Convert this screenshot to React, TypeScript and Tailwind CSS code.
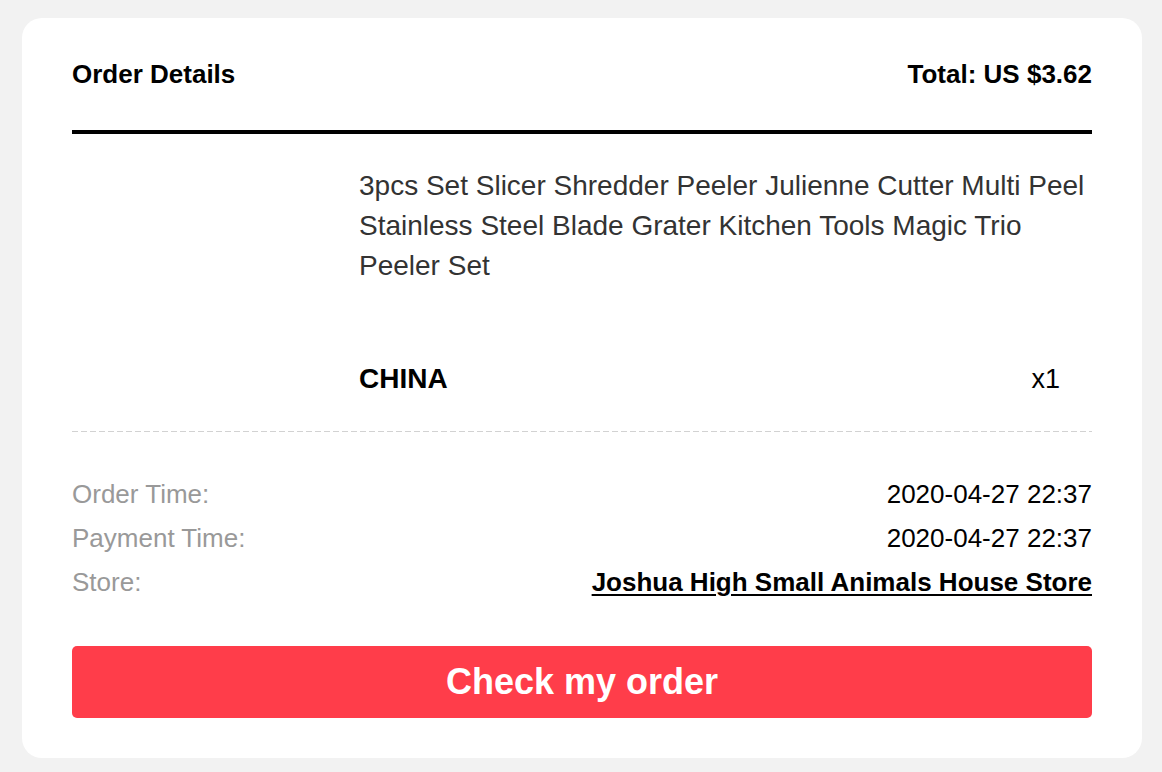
import React from 'react';

const font = { fontFamily: '"Liberation Sans", Arial, Helvetica, sans-serif' };

const infoRows = [
  { label: 'Order Time:', value: '2020-04-27 22:37' },
  { label: 'Payment Time:', value: '2020-04-27 22:37' },
];

export default function App() {
  return (
    <div
      className="min-h-[772px] w-full bg-[#f2f2f2] pt-[18px] pb-[14px] pl-[22px] pr-[20px]"
      style={font}
    >
      <div className="rounded-[20px] bg-white px-[50px] pb-[40px]">
        {/* header */}
        <div className="flex h-[116px] items-center justify-between border-b-4 border-black text-[26px] font-bold text-black">
          <span>Order Details</span>
          <span>Total: US $3.62</span>
        </div>

        {/* product */}
        <div className="flex pt-8 pb-[32px]">
          <div className="w-[287px] shrink-0" />
          <div className="flex-1">
            <p className="text-[28px] leading-[40px] text-[#333]">
              3pcs Set Slicer Shredder Peeler Julienne Cutter Multi Peel
              Stainless Steel Blade Grater Kitchen Tools Magic Trio Peeler Set
            </p>
            <div className="mt-[73px] flex items-center justify-between pr-8 leading-[40px] text-black">
              <span className="text-[28px] font-bold">CHINA</span>
              <span className="text-[27px]">x1</span>
            </div>
          </div>
        </div>
        <div className="h-px bg-[repeating-linear-gradient(to_right,#d2d2d2_0_6px,transparent_6px_9px)]" />

        {/* info */}
        <div className="pt-[40px] text-[26px] leading-[44px]">
          {infoRows.map(row => (
            <div key={row.label} className="flex justify-between">
              <span className="text-[#999]">{row.label}</span>
              <span className="text-black">{row.value}</span>
            </div>
          ))}
          <div className="flex justify-between">
            <span className="text-[#999]">Store:</span>
            <a
              href="#"
              className="font-bold text-black underline decoration-2 underline-offset-[3px]"
            >
              Joshua High Small Animals House Store
            </a>
          </div>
        </div>

        <button className="mt-[42px] flex h-[72px] w-full items-center justify-center rounded-[5px] bg-[#ff3d4a] text-[36px] font-bold text-white">
          Check my order
        </button>
      </div>
    </div>
  );
}
